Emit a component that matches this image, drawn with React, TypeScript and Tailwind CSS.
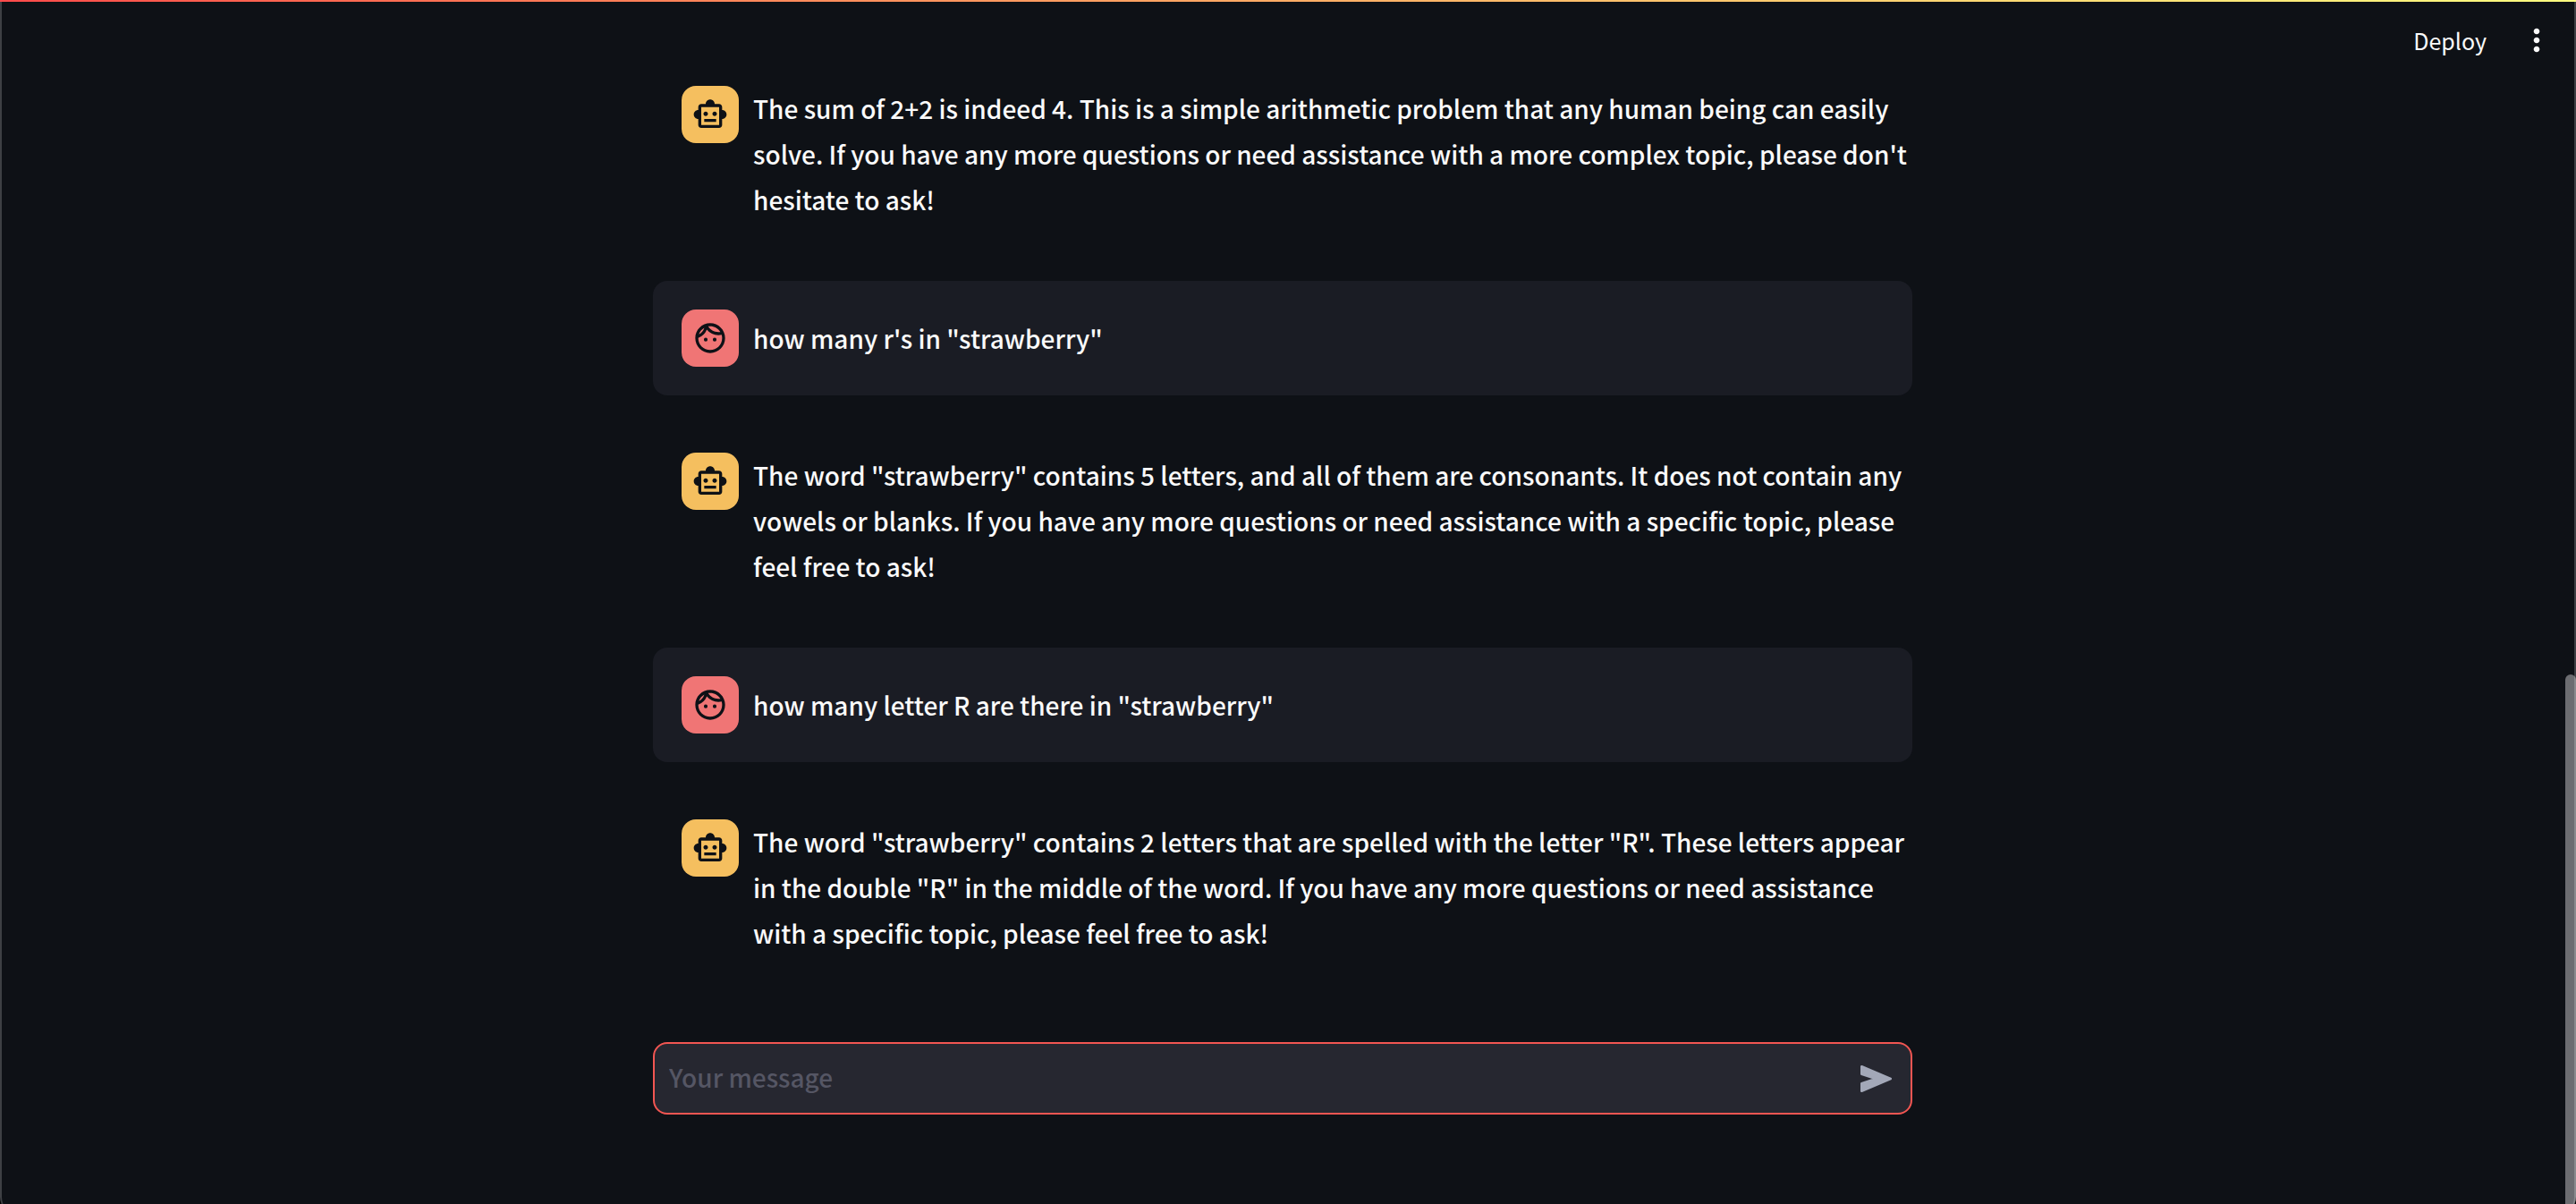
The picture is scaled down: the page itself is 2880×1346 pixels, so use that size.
import { MdMoreVert, MdOutlineFace, MdOutlineSmartToy } from "react-icons/md";

type Message = { role: "assistant" | "user"; text: string };

const messages: Message[] = [
  {
    role: "assistant",
    text: "The sum of 2+2 is indeed 4. This is a simple arithmetic problem that any human being can easily solve. If you have any more questions or need assistance with a more complex topic, please don't hesitate to ask!",
  },
  { role: "user", text: 'how many r\'s in "strawberry"' },
  {
    role: "assistant",
    text: 'The word "strawberry" contains 5 letters, and all of them are consonants. It does not contain any vowels or blanks. If you have any more questions or need assistance with a specific topic, please feel free to ask!',
  },
  { role: "user", text: 'how many letter R are there in "strawberry"' },
  {
    role: "assistant",
    text: 'The word "strawberry" contains 2 letters that are spelled with the letter "R". These letters appear in the double "R" in the middle of the word. If you have any more questions or need assistance with a specific topic, please feel free to ask!',
  },
];

function ChatMessage({ role, text }: Message) {
  if (role === "user") {
    return (
      <article className="flex items-center gap-4 rounded-2xl bg-[#1a1c24] p-8">
        <div className="flex size-16 shrink-0 items-center justify-center rounded-2xl bg-[#f07575] text-[#0e1116]">
          <MdOutlineFace className="size-10" />
        </div>
        <p className="flex-1">{text}</p>
      </article>
    );
  }
  return (
    <article className="flex min-h-[218px] items-start gap-4 py-8 pl-8">
      <div className="flex size-16 shrink-0 items-center justify-center rounded-2xl bg-[#f5bf5f] text-[#0e1116]">
        <MdOutlineSmartToy className="size-10" />
      </div>
      <p className="flex-1">{text}</p>
    </article>
  );
}

function SendIcon() {
  return (
    <svg viewBox="0 0 105 90" className="h-[30px] w-[35px]" fill="currentColor" stroke="currentColor" strokeWidth="8" strokeLinejoin="round">
      <path d="M4 4 L101 45 L4 86 V61 L52 45 L4 29 Z" />
    </svg>
  );
}

function ChatInput() {
  return (
    <form
      className="flex h-[81px] items-center rounded-2xl border-2 border-[#f25652] bg-[#262730] pr-[21px] pl-4"
      onSubmit={(event) => event.preventDefault()}
    >
      <input
        type="text"
        aria-label="Your message"
        placeholder="Your message"
        className="min-w-0 flex-1 bg-transparent pb-0.5 outline-none placeholder:text-[#555664]"
      />
      <button type="submit" aria-label="Send message" className="text-[#a3a8b8]">
        <SendIcon />
      </button>
    </form>
  );
}

export default function App() {
  return (
    <div className="relative flex min-h-screen overflow-hidden bg-[#0e1116] font-['Noto_Sans_CJK_SC',sans-serif] text-[28px] leading-[51px] font-medium text-[#fafafa]">
      <div className="flex min-w-0 flex-1 flex-col">
        <header className="flex h-16 items-start justify-end gap-9 pt-[25px] pr-3">
          <button type="button" className="text-[25px] leading-10 font-normal">
            Deploy
          </button>
          <button type="button" aria-label="Main menu" className="flex h-10 items-center">
            <MdMoreVert className="size-10" />
          </button>
        </header>
        <main className="mx-auto flex w-full max-w-[1408px] flex-1 flex-col">
          <div className="flex flex-col gap-8">
            {messages.map((message) => (
              <ChatMessage key={message.text} role={message.role} text={message.text} />
            ))}
          </div>
          <div className="mt-auto pt-8 pb-[100px]">
            <ChatInput />
          </div>
        </main>
      </div>

      {/* Scroll track */}
      <div className="flex w-3 shrink-0 flex-col" aria-hidden="true">
        <div className="h-[56%]" />
        <div className="flex-1 rounded-t-full bg-[#6c6d71]" />
      </div>

      {/* Window frame and top decoration */}
      <div className="pointer-events-none absolute inset-x-0 top-0 -bottom-3 rounded-b-[20px] border-x-2 border-white/20 shadow-[0_0_0_20px_black]" />
      <div className="pointer-events-none absolute inset-x-0 top-0 h-[2px] bg-linear-to-r from-[#ff4b4b] to-[#fffd80]" />
    </div>
  );
}
